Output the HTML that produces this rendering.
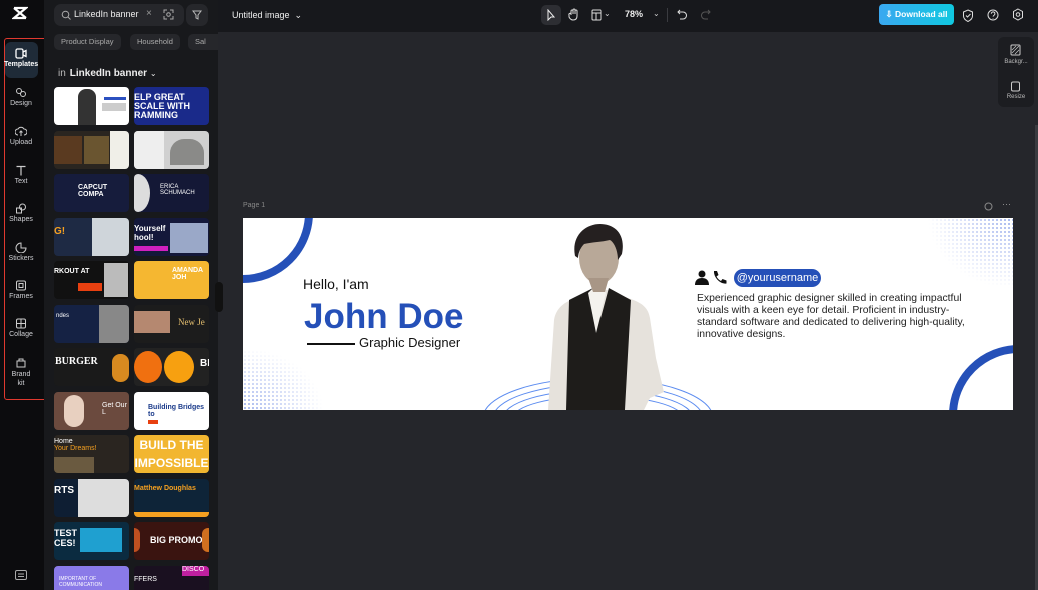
<!DOCTYPE html>
<html><head><meta charset="utf-8"><style>
*{box-sizing:border-box;margin:0;padding:0}
html,body{width:1038px;height:590px;overflow:hidden}
body{background:#25262b;font-family:"Liberation Sans",sans-serif;position:relative;color:#ddd}
.abs{position:absolute}
#side{left:0;top:0;width:44px;height:590px;background:#0c0c0e}
#panel{left:44px;top:0;width:174px;height:590px;background:#18191c}
#top{left:218px;top:0;width:820px;height:32px;background:#17181c}
.nav{position:absolute;left:4px;width:34px;text-align:center;font-size:7px;color:#cfd0d4}
.nav svg{display:block;margin:0 auto 2px}
.th{position:absolute;width:75px;height:38px;border-radius:4px;overflow:hidden}
.chip{position:absolute;top:34px;height:16px;border-radius:5px;background:#26272b;font-size:7.5px;color:#aaa;line-height:16px;padding:0 7px}
</style></head><body>
<div id="side" class="abs">
 <svg class="abs" style="left:12px;top:6px" width="16" height="14" viewBox="0 0 16 14"><path d="M2 2h12L2 12h12M2 2l12 10" stroke="#fff" stroke-width="2.2" fill="none"/></svg>
 <div class="abs" style="left:4px;top:38px;width:43px;height:362px;border:1.5px solid #e0392f;border-radius:3px"></div>
 <div class="abs" style="left:5px;top:42px;width:33px;height:36px;background:#1f2b38;border-radius:6px"></div>
 <div class="nav" style="top:48px;color:#fff;font-weight:bold"><svg width="12" height="11" viewBox="0 0 12 11"><rect x="1" y="1" width="7" height="9" rx="1.5" stroke="#fff" fill="none" stroke-width="1.3"/><path d="M8 4l3-1.5v6L8 7" stroke="#fff" fill="none" stroke-width="1.3"/></svg>Templates</div>
 <div class="nav" style="top:87px"><svg width="12" height="11"><circle cx="4" cy="4" r="2.5" stroke="#ccc" fill="none"/><circle cx="8" cy="7" r="2.5" stroke="#ccc" fill="none"/></svg>Design</div>
 <div class="nav" style="top:126px"><svg width="12" height="11"><path d="M3 9a3 3 0 010-6 3.5 3.5 0 016 0 3 3 0 010 6M6 5v5M4.5 6.5L6 5l1.5 1.5" stroke="#ccc" fill="none"/></svg>Upload</div>
 <div class="nav" style="top:165px;font-size:7px"><svg width="12" height="11"><path d="M1.5 1.5h9M6 1.5v9" stroke="#ccc" fill="none" stroke-width="1.2"/></svg>Text</div>
 <div class="nav" style="top:203px"><svg width="12" height="11"><circle cx="7.5" cy="4" r="3" stroke="#ccc" fill="none"/><rect x="1.5" y="5" width="5" height="5" stroke="#ccc" fill="none"/></svg>Shapes</div>
 <div class="nav" style="top:242px"><svg width="12" height="11"><path d="M6 1a5 5 0 105 5h-5z" stroke="#ccc" fill="none"/></svg>Stickers</div>
 <div class="nav" style="top:280px"><svg width="12" height="11"><rect x="1.5" y="1" width="9" height="9" rx="1.5" stroke="#ccc" fill="none"/><rect x="4" y="3.5" width="4" height="4" stroke="#ccc" fill="none"/></svg>Frames</div>
 <div class="nav" style="top:318px"><svg width="12" height="11"><rect x="1.5" y="1" width="9" height="9" rx="1.5" stroke="#ccc" fill="none"/><path d="M6 1v9M1.5 5.5h9" stroke="#ccc"/></svg>Collage</div>
 <div class="nav" style="top:357px;line-height:9px"><svg width="12" height="11"><path d="M2 4h8v6H2zM4 4V2h4v2" stroke="#ccc" fill="none"/></svg>Brand<br>kit</div>
 <svg class="abs" style="left:15px;top:570px" width="12" height="10"><rect x=".5" y=".5" width="11" height="9" rx="1.5" stroke="#aaa" fill="none"/><path d="M3 4h6M3 6.5h6" stroke="#aaa"/></svg>
</div>
<div id="panel" class="abs">
 <div class="abs" style="left:10px;top:4px;width:130px;height:22px;background:#26272b;border-radius:7px"></div>
 <svg class="abs" style="left:17px;top:10px" width="10" height="10"><circle cx="4.5" cy="4.5" r="3.3" stroke="#aaa" fill="none"/><path d="M7 7l2.5 2.5" stroke="#aaa"/></svg>
 <div class="abs" style="left:30px;top:9px;font-size:9px;color:#eee">LinkedIn banner</div>
 <div class="abs" style="left:102px;top:8px;font-size:10px;color:#999">×</div>
 <svg class="abs" style="left:119px;top:9px" width="11" height="11"><path d="M1 4V1h3M7 1h3v3M10 7v3H7M4 10H1V7" stroke="#aaa" fill="none"/><circle cx="5.5" cy="5.5" r="1.8" stroke="#aaa" fill="none"/></svg>
 <div class="abs" style="left:142px;top:4px;width:22px;height:22px;background:#26272b;border-radius:7px"></div>
 <svg class="abs" style="left:148px;top:10px" width="10" height="10"><path d="M1 1h8L6 5v4L4 8V5z" stroke="#bbb" fill="none"/></svg>
 <div class="chip" style="left:10px">Product Display</div>
 <div class="chip" style="left:86px">Household</div>
 <div class="chip" style="left:144px;width:30px;border-radius:5px 0 0 5px">Sal</div>
 <div class="abs" style="left:14px;top:68px;font-size:10px;color:#eee;font-weight:bold"><span style="font-weight:normal;color:#bbb;margin-right:4px">in</span>LinkedIn banner <span style="font-weight:normal;font-size:8px">⌄</span></div>
</div>
<div class="th" style="left:54px;top:87px;background:#fff"><div class="abs" style="left:24px;top:2px;width:18px;height:36px;background:#333;border-radius:8px 8px 0 0"></div><div class="abs" style="left:50px;top:10px;width:22px;height:3px;background:#2b50c0"></div><div class="abs" style="left:48px;top:16px;width:24px;height:8px;background:#ccc"></div></div>
<div class="th" style="left:134px;top:87px;background:#1a2a8a;color:#fff;font-weight:bold;font-size:9px;line-height:9px;padding:6px 0 0 0">ELP GREAT<br>SCALE WITH<br>RAMMING</div>
<div class="th" style="left:54px;top:131px;background:#2a2520"><div class="abs" style="left:0;top:5px;width:28px;height:28px;background:#5a3a20"></div><div class="abs" style="left:30px;top:5px;width:25px;height:28px;background:#6a5530"></div><div class="abs" style="left:56px;top:0;width:19px;height:38px;background:#f0efe8"></div></div>
<div class="th" style="left:134px;top:131px;background:#d0d0d0"><div class="abs" style="left:0;top:0;width:30px;height:38px;background:#eee"></div><div class="abs" style="left:36px;top:8px;width:34px;height:26px;background:#8a8a88;border-radius:14px 14px 0 0"></div></div>
<div class="th" style="left:54px;top:174px;background:#161c3c;color:#fff;font-size:7px;font-weight:bold;padding:10px 0 0 24px">CAPCUT COMPA</div>
<div class="th" style="left:134px;top:174px;background:#141836;color:#fff;font-size:6px;padding:10px 0 0 26px"><div class="abs" style="left:-8px;top:0;width:24px;height:38px;background:#ddd;border-radius:50%"></div>ERICA SCHUMACH</div>
<div class="th" style="left:54px;top:218px;background:#1e2a44"><div class="abs" style="left:0;top:8px;font-size:10px;color:#f5a020;font-weight:bold">G!</div><div class="abs" style="left:38px;top:0;width:37px;height:38px;background:#cfd5da"></div></div>
<div class="th" style="left:134px;top:218px;background:#14183a;color:#fff;font-size:8px;font-weight:bold;padding:6px 0 0 0">Yourself<br>hool!<div class="abs" style="left:36px;top:5px;width:38px;height:30px;background:#9aa8c8"></div><div class="abs" style="left:0;top:28px;width:34px;height:5px;background:#d020c0"></div></div>
<div class="th" style="left:54px;top:261px;background:#111;color:#fff;font-size:7px;font-weight:bold;padding:7px 0 0 0">RKOUT AT<div class="abs" style="left:50px;top:2px;width:24px;height:34px;background:#bbb"></div><div class="abs" style="left:24px;top:22px;width:24px;height:8px;background:#e84010"></div></div>
<div class="th" style="left:134px;top:261px;background:#f5b731;color:#fff;font-size:7px;font-weight:bold;padding:6px 0 0 38px">AMANDA JOH</div>
<div class="th" style="left:54px;top:305px;background:#152244;font-size:6px;color:#fff;padding:8px 0 0 2px">ndes<div class="abs" style="left:45px;top:0;width:30px;height:38px;background:#888"></div></div>
<div class="th" style="left:134px;top:305px;background:#1c1c1c"><div class="abs" style="left:0;top:6px;width:36px;height:22px;background:#b58870"></div><div class="abs" style="left:44px;top:12px;font-size:9px;color:#e6c070;font-family:'Liberation Serif'">New Je</div></div>
<div class="th" style="left:54px;top:348px;background:#1a1a1a;color:#fff;font-size:10px;font-weight:bold;font-family:'Liberation Serif';padding:8px 0 0 1px">BURGER<div class="abs" style="left:58px;top:6px;width:17px;height:28px;background:#d88a20;border-radius:8px"></div></div>
<div class="th" style="left:134px;top:348px;background:#222"><div class="abs" style="left:0;top:3px;width:28px;height:32px;background:#f07010;border-radius:50%"></div><div class="abs" style="left:30px;top:3px;width:30px;height:32px;background:#f7a010;border-radius:50%"></div><div class="abs" style="left:66px;top:10px;color:#fff;font-weight:bold;font-size:10px">BI</div></div>
<div class="th" style="left:54px;top:392px;background:#6b4a3e"><div class="abs" style="left:10px;top:3px;width:20px;height:32px;background:#e8d0c0;border-radius:10px"></div><div class="abs" style="left:48px;top:10px;font-size:7px;color:#fff">Get Our L</div></div>
<div class="th" style="left:134px;top:392px;background:#fff"><div class="abs" style="left:14px;top:12px;font-size:7px;color:#1a3a8a;font-weight:bold">Building Bridges to</div><div class="abs" style="left:14px;top:28px;width:10px;height:4px;background:#e84010"></div></div>
<div class="th" style="left:54px;top:435px;background:#2a2520;color:#fff;font-size:7px;padding:3px 0 0 0">Home<br><span style="color:#f5a020">Your Dreams!</span><div class="abs" style="left:0;top:22px;width:40px;height:16px;background:#6a5a40"></div></div>
<div class="th" style="left:134px;top:435px;background:#f2b630;color:#fff;font-weight:bold;font-size:12px;line-height:18px;text-align:center;padding-top:1px">BUILD THE<br>IMPOSSIBLE</div>
<div class="th" style="left:54px;top:479px;background:#0e1e33;color:#fff;font-weight:bold;font-size:10px;padding:6px 0 0 0">RTS<div class="abs" style="left:24px;top:0;width:51px;height:38px;background:#ddd"></div></div>
<div class="th" style="left:134px;top:479px;background:#0e2438;font-size:7px;color:#f5a020;font-weight:bold;padding:6px 0 0 0">Matthew Doughlas<div class="abs" style="left:0;top:33px;width:75px;height:5px;background:#f5a020"></div></div>
<div class="th" style="left:54px;top:522px;background:#0b2b40;color:#fff;font-weight:bold;font-size:9px;padding:6px 0 0 0">TEST<br>CES!<div class="abs" style="left:26px;top:6px;width:42px;height:24px;background:#1fa0d0"></div></div>
<div class="th" style="left:134px;top:522px;background:#3a1410;color:#fff;font-weight:bold;font-size:9px;padding:13px 0 0 16px">BIG PROMO!<div class="abs" style="left:-6px;top:6px;width:12px;height:24px;background:#c05020;border-radius:6px"></div><div class="abs" style="left:68px;top:6px;width:12px;height:24px;background:#d07020;border-radius:6px"></div></div>
<div class="th" style="left:54px;top:566px;background:#8a7ae8;font-size:5px;color:#fff;padding:10px 0 0 5px">IMPORTANT OF COMMUNICATION</div>
<div class="th" style="left:134px;top:566px;background:#1a1020;color:#fff;font-size:7px;padding:10px 0 0 0">FFERS<div class="abs" style="left:48px;top:0;width:27px;height:10px;background:#c020a0;font-size:7px">DISCO</div></div>
<div class="abs" style="left:215px;top:282px;width:8px;height:30px;background:#111;border-radius:4px"></div>
<div id="top" class="abs">
 <div class="abs" style="left:14px;top:10px;font-size:9px;color:#eee">Untitled image &nbsp;⌄</div>
 <div class="abs" style="left:323px;top:5px;width:20px;height:20px;background:#2d2e33;border-radius:5px"></div>
 <svg class="abs" style="left:328px;top:9px" width="10" height="12"><path d="M2 1v10l3-3 3 0z" stroke="#eee" fill="none"/></svg>
 <svg class="abs" style="left:350px;top:8px" width="11" height="13"><path d="M3 7V3a1 1 0 012 0v3-4a1 1 0 012 0v4-3a1 1 0 012 0v5c0 3-2 4-4 4s-3-1-4-3L1 7a1 1 0 012-1z" stroke="#ddd" fill="none"/></svg>
 <svg class="abs" style="left:373px;top:9px" width="11" height="12"><rect x="1" y="1" width="9" height="10" rx="1" stroke="#ddd" fill="none"/><path d="M1 4h9M5 4v7" stroke="#ddd"/></svg>
 <div class="abs" style="left:386px;top:9px;font-size:8px;color:#ccc">⌄</div>
 <div class="abs" style="left:407px;top:9px;font-size:9px;color:#eee;font-weight:bold">78%</div>
 <div class="abs" style="left:435px;top:9px;font-size:8px;color:#ccc">⌄</div>
 <div class="abs" style="left:449px;top:8px;width:1px;height:14px;background:#3a3b40"></div>
 <svg class="abs" style="left:459px;top:9px" width="11" height="12"><path d="M3 1L1 3l2 2M1 3h5a3.5 3.5 0 010 7H3" stroke="#ddd" fill="none"/></svg>
 <svg class="abs" style="left:482px;top:9px" width="11" height="12"><path d="M8 1l2 2-2 2M10 3H5a3.5 3.5 0 000 7h3" stroke="#555" fill="none"/></svg>
 <div class="abs" style="left:661px;top:4px;width:75px;height:21px;border-radius:4px;background:linear-gradient(90deg,#3aa8f0,#10c8e0);color:#fff;font-size:8.5px;font-weight:bold;line-height:21px;text-align:center">⇩ Download all</div>
 <svg class="abs" style="left:744px;top:9px" width="12" height="13"><path d="M6 1l4.5 2v4c0 3-2.5 4.5-4.5 5.5C4 11.5 1.5 10 1.5 7V3z" stroke="#ddd" fill="none"/><path d="M4 6.5l1.5 1.5 3-3" stroke="#ddd" fill="none"/></svg>
 <svg class="abs" style="left:769px;top:9px" width="12" height="12"><circle cx="6" cy="6" r="5" stroke="#ddd" fill="none"/><path d="M4.3 4.7a1.8 1.8 0 113 1.3c-.8.5-1.2.8-1.2 1.6M6 9v.5" stroke="#ddd" fill="none"/></svg>
 <svg class="abs" style="left:794px;top:8px" width="12" height="13"><path d="M6 1l4.5 2.5v6L6 12 1.5 9.5v-6z" stroke="#ddd" fill="none"/><circle cx="6" cy="6.5" r="1.8" stroke="#ddd" fill="none"/></svg>
</div>
<div class="abs" style="left:998px;top:37px;width:36px;height:70px;background:#1c1d21;border-radius:6px"></div>
<svg class="abs" style="left:1010px;top:44px" width="11" height="12"><rect x="1" y="1" width="9" height="10" rx="1" stroke="#ccc" fill="none"/><path d="M2 9l7-7M2 6l4-4M5 10l4-4" stroke="#ccc" stroke-width=".7"/></svg>
<div class="abs" style="left:1000px;top:59px;width:32px;text-align:center;font-size:6px;color:#bbb">Backgr...</div>
<svg class="abs" style="left:1010px;top:80px" width="11" height="12"><rect x="1.5" y="2" width="8" height="9" rx="1.5" stroke="#ccc" fill="none"/></svg>
<div class="abs" style="left:1000px;top:94px;width:32px;text-align:center;font-size:6px;color:#bbb">Resize</div>
<div class="abs" style="left:1035px;top:125px;width:3px;height:465px;background:#3a3b40"></div>
<div class="abs" style="left:243px;top:202px;font-size:7px;color:#888">Page 1</div>
<svg class="abs" style="left:984px;top:202px" width="9" height="9"><circle cx="4.5" cy="4.5" r="3.5" stroke="#888" fill="none"/></svg>
<div class="abs" style="left:1002px;top:199px;font-size:9px;color:#999">···</div>
<div class="abs" style="left:243px;top:218px;width:770px;height:192px;background:#fff;overflow:hidden">
<svg width="770" height="192" style="position:absolute;left:0;top:0">
<defs><pattern id="dots" width="4" height="4" patternUnits="userSpaceOnUse"><circle cx="2" cy="2" r="1" fill="#5a7ae0"/></pattern>
<radialGradient id="fa" cx="0" cy="1" r="1"><stop offset="0" stop-color="#fff" stop-opacity="0"/><stop offset="1" stop-color="#fff"/></radialGradient>
<radialGradient id="fb" cx="1" cy="0" r="1"><stop offset="0" stop-color="#fff" stop-opacity="0"/><stop offset="1" stop-color="#fff"/></radialGradient></defs>
<rect x="0" y="130" width="80" height="62" fill="url(#dots)" opacity=".7"/><rect x="0" y="130" width="80" height="62" fill="url(#fa)"/>
<rect x="685" y="0" width="85" height="70" fill="url(#dots)" opacity=".7"/><rect x="685" y="0" width="85" height="70" fill="url(#fb)"/>
<circle cx="0" cy="-5" r="66" stroke="#2550b8" stroke-width="8" fill="none"/>
<circle cx="776" cy="197" r="66" stroke="#2550b8" stroke-width="8" fill="none"/>
<g stroke="#5c8cf0" fill="none" stroke-width="1">
<ellipse cx="355" cy="200" rx="115" ry="40"/><ellipse cx="355" cy="200" rx="105" ry="34"/><ellipse cx="355" cy="200" rx="95" ry="28"/><ellipse cx="355" cy="200" rx="85" ry="22"/></g>
<path d="M305 192l6-90c2-12 10-18 22-22l18-8h14l20 8c12 4 20 8 22 20l6 40 8 34-14 6-6 12z" fill="#e6e2dc"/>
<path d="M323 192l3-110 24-12 8 30 8-30 22 12-6 110z" fill="#1e1c1a"/>
<path d="M345 75l8 40 10-40-8-10z" fill="#f4f2ee"/>
<ellipse cx="356" cy="40" rx="20" ry="26" fill="#b8a898"/>
<path d="M332 38c-4-20 10-32 25-32s26 10 22 30l-4 6c0-10-4-18-8-20-8 2-18 2-26 4-4 4-6 10-6 14z" fill="#252020"/>
<path d="M345 60l5 14h12l4-14z" fill="#a89686"/>
</svg>
<div class="abs" style="left:60px;top:58px;font-size:14px;color:#111">Hello, I'am</div>
<div class="abs" style="left:61px;top:79px;font-size:35px;font-weight:bold;color:#2550b8;letter-spacing:0">John Doe</div>
<div class="abs" style="left:64px;top:125px;width:48px;height:2px;background:#111"></div>
<div class="abs" style="left:116px;top:117px;font-size:13px;color:#111">Graphic Designer</div>
<svg class="abs" style="left:452px;top:52px" width="34" height="16"><circle cx="7" cy="4" r="3.5" fill="#111"/><path d="M0 15c0-5 3-7 7-7s7 2 7 7z" fill="#111"/><path d="M19 1l3 0 1.5 4-2 1.5c1 2 2.5 3.5 4.5 4.5L27.5 9l4 1.5v3c-6 1-13-6-12.5-12.5z" fill="#111"/></svg>
<div class="abs" style="left:491px;top:51px;width:87px;height:18px;background:#2550b8;border-radius:9px;color:#fff;font-size:11px;line-height:18px;text-align:center">@yourusername</div>
<div class="abs" style="left:454px;top:75px;width:280px;font-size:10.4px;line-height:12px;color:#222">Experienced graphic designer skilled in creating impactful visuals with a keen eye for detail. Proficient in industry-standard software and dedicated to delivering high-quality, innovative designs.</div>
</div>
</body></html>
